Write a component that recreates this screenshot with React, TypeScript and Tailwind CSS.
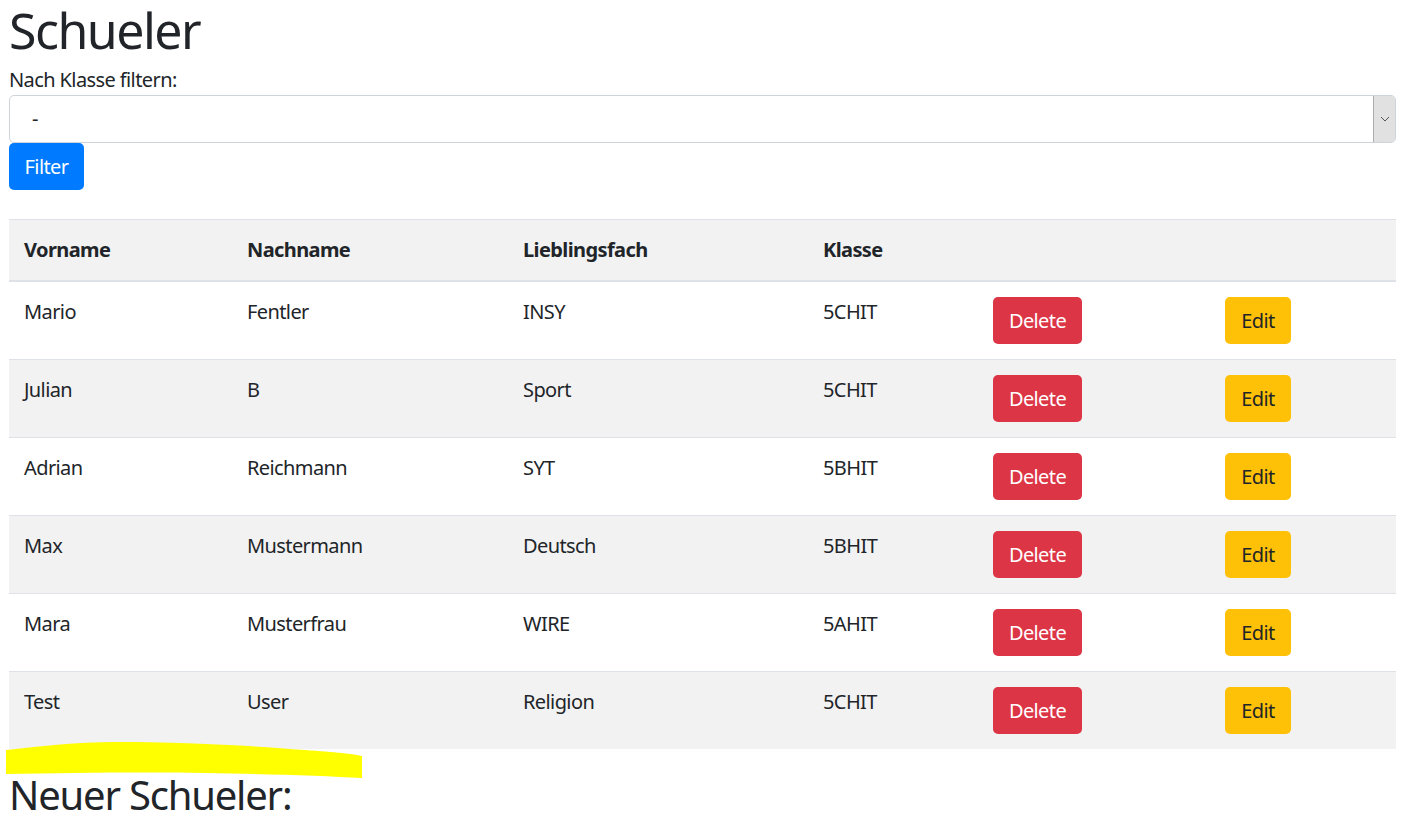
const schueler = [
  { vorname: "Mario", nachname: "Fentler", fach: "INSY", klasse: "5CHIT" },
  { vorname: "Julian", nachname: "B", fach: "Sport", klasse: "5CHIT" },
  { vorname: "Adrian", nachname: "Reichmann", fach: "SYT", klasse: "5BHIT" },
  { vorname: "Max", nachname: "Mustermann", fach: "Deutsch", klasse: "5BHIT" },
  { vorname: "Mara", nachname: "Musterfrau", fach: "WIRE", klasse: "5AHIT" },
  { vorname: "Test", nachname: "User", fach: "Religion", klasse: "5CHIT" },
];

const cols = "grid grid-cols-[223px_276px_300px_170px_232px_1fr]";

export default function App() {
  return (
    <div className="relative min-h-screen bg-white text-[#212529] font-['Noto_Sans',sans-serif] text-[20px] leading-[30px] tracking-[-0.6px] px-[9px] pr-[18px]">
      {/* Titel */}
      <h1 className="text-[50px] leading-[60px] font-normal tracking-[-1.5px]">Schueler</h1>

      {/* Filter */}
      <label className="block mt-[5px]">Nach Klasse filtern:</label>
      <div className="flex h-[48px] items-stretch rounded-[5px] border border-[#ced4da] bg-white">
        <div className="flex-1 pl-[22px] flex items-center">-</div>
        <div className="w-[22px] flex items-center justify-center bg-[#e1e1e1] border-l border-[#adadad] rounded-r-[4px]">
          <svg width="10" height="6" viewBox="0 0 10 6">
            <path d="M1 1 L5 5 L9 1" fill="none" stroke="#555" strokeWidth="1" />
          </svg>
        </div>
      </div>
      <button className="h-[47px] w-[75px] rounded-[5px] bg-[#007bff] text-white">Filter</button>

      {/* Tabelle */}
      <div className="mt-[29px]">
        <div className={`${cols} bg-[#f2f2f2] border-t border-b border-[#dee2e6] font-bold`}>
          <div className="p-[15px]">Vorname</div>
          <div className="p-[15px]">Nachname</div>
          <div className="p-[15px]">Lieblingsfach</div>
          <div className="p-[15px]">Klasse</div>
          <div className="p-[15px]"></div>
          <div className="p-[15px]"></div>
        </div>
        {schueler.map((s, i) => (
          <div
            key={i}
            className={`${cols} border-t border-[#dee2e6] first:border-t-0 ${i % 2 === 1 ? "bg-[#f2f2f2]" : "bg-white"}`}
          >
            <div className="p-[15px]">{s.vorname}</div>
            <div className="p-[15px]">{s.nachname}</div>
            <div className="p-[15px]">{s.fach}</div>
            <div className="p-[15px]">{s.klasse}</div>
            <div className="p-[15px]">
              <button className="h-[47px] w-[89px] rounded-[5px] bg-[#dc3545] text-white">Delete</button>
            </div>
            <div className="p-[15px]">
              <button className="h-[47px] w-[66px] rounded-[5px] bg-[#ffc107] text-[#212529]">Edit</button>
            </div>
          </div>
        ))}
      </div>

      <h2 className="mt-[22px] text-[40px] leading-[48px] font-normal tracking-[-1.2px]">Neuer Schueler:</h2>

      {/* Markierung */}
      <svg className="absolute left-[5px] top-[740px]" width="360" height="40" viewBox="0 0 360 40">
        <path
          d="M1 10 C40 6 70 2 110 2 C180 2 250 6 300 10 C330 12 350 14 357 16 L357 38 C320 36 260 34 200 33 C140 32 60 33 1 34 Z"
          fill="#ffff00"
        />
      </svg>
    </div>
  );
}
